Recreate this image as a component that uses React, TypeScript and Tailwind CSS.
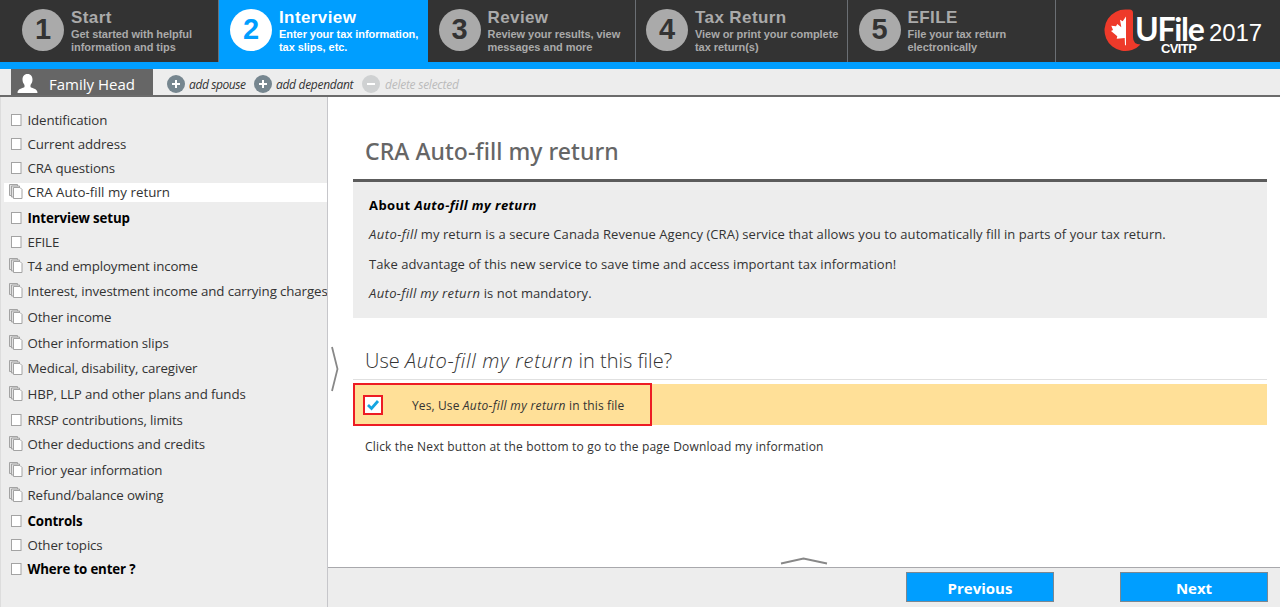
import React from "react";

type Step = { n: number; title: string; lines: [string, string]; width: string; active?: boolean };

const steps: Step[] = [
  { n: 1, title: "Start", lines: ["Get started with helpful", "information and tips"], width: "w-[219px] pl-[22px]" },
  { n: 2, title: "Interview", lines: ["Enter your tax information,", "tax slips, etc."], width: "w-[209px] pl-[11px]", active: true },
  { n: 3, title: "Review", lines: ["Review your results, view", "messages and more"], width: "w-[208px] pl-[10.500px]" },
  { n: 4, title: "Tax Return", lines: ["View or print your complete", "tax return(s)"], width: "w-[212px] pl-[10px]" },
  { n: 5, title: "EFILE", lines: ["File your tax return", "electronically"], width: "w-[208px] pl-[10.500px]" },
];

type Item = { label: string; stacked?: boolean; bold?: boolean; selected?: boolean };

const items: Item[] = [
  { label: "Identification" },
  { label: "Current address" },
  { label: "CRA questions" },
  { label: "CRA Auto-fill my return", stacked: true, selected: true },
  { label: "Interview setup", bold: true },
  { label: "EFILE" },
  { label: "T4 and employment income", stacked: true },
  { label: "Interest, investment income and carrying charges", stacked: true },
  { label: "Other income", stacked: true },
  { label: "Other information slips", stacked: true },
  { label: "Medical, disability, caregiver", stacked: true },
  { label: "HBP, LLP and other plans and funds", stacked: true },
  { label: "RRSP contributions, limits" },
  { label: "Other deductions and credits", stacked: true },
  { label: "Prior year information", stacked: true },
  { label: "Refund/balance owing", stacked: true },
  { label: "Controls", bold: true },
  { label: "Other topics" },
  { label: "Where to enter ?", bold: true },
];

function PageIcon() {
  return (
    <svg width="16" height="18" viewBox="0 0 16 18" className="block shrink-0">
      <rect x="3.5" y="3.5" width="9.500" height="11" fill="#fff" stroke="#a3a3a3" />
    </svg>
  );
}

function PagesIcon() {
  return (
    <svg width="16" height="18" viewBox="0 0 16 18" className="block shrink-0">
      <path d="M1.500 1.500h8v11h-8z" fill="#e2e2e2" stroke="#a3a3a3" />
      <path d="M3.500 3h8v11h-8z" fill="#e2e2e2" stroke="#a3a3a3" />
      <path d="M5.500 4.500h6.500l2 2v9h-8.500z" fill="#fff" stroke="#a3a3a3" />
    </svg>
  );
}

function RoundIcon({ minus }: { minus?: boolean }) {
  return (
    <svg width="18" height="18" viewBox="0 0 18 18" className="mt-[3px] block shrink-0">
      <circle cx="9" cy="9" r="9" fill={minus ? "#cfd1d2" : "#76868f"} />
      <path d={minus ? "M5 9h8" : "M5 9h8M9 5v8"} stroke="#fff" strokeWidth="2" />
    </svg>
  );
}

function Logo() {
  return (
    <div className="relative h-[62px] w-[160px]">
      <svg width="40" height="44" viewBox="0 0 40 44" className="absolute left-0 top-[8px]">
        <path d="M21.500 1.500H25.500q3.500 0 3.500 3.500V29q0 7.500 7.500 7.500A20.800 20.800 0 1 1 21.500 1.500z" fill="#ee3a2a" />
        <path
          d="M22 8.500l-3.300 4.800-2.700-1.600 1.300 7.600-4-3.300-1.300 2.300-4.700-.6 1.700 4.300-2 1 6.300 5.300-.6 2.400 8-.7.300 7.300h1z"
          fill="#fff"
        />
      </svg>
      <div className="absolute left-[31px] top-[14px] font-[Lato] text-[32px] font-bold leading-[29px] tracking-[-1.300px]">UFile</div>
      <div className="absolute left-[57px] top-[42px] text-[13px] font-bold leading-[14px] tracking-[-0.6px]">CVITP</div>
      <div className="absolute left-[105px] top-[19px] text-[24px] leading-[28px] tracking-[-0.1px]">2017</div>
    </div>
  );
}

export default function App() {
  return (
    <div className="flex h-[607px] w-[1280px] flex-col overflow-hidden bg-white font-['Open_Sans','Noto_Sans',sans-serif] text-[#333]">
      <header className="flex h-[69px] shrink-0 border-b-[7px] border-[#009eff] bg-[#333] font-['Liberation_Sans',sans-serif] text-white">
        {steps.map((s) => (
          <div
            key={s.n}
            className={`flex shrink-0 border-r pt-[9px] whitespace-nowrap ${s.width} ${
              s.active ? "border-[#009eff] bg-[#009eff] text-white" : "border-[#6b6f74] text-[#aaa]"
            }`}
          >
            <div
              className={`flex h-[42px] w-[42px] shrink-0 items-center justify-center rounded-full text-[29px] font-bold ${
                s.active ? "bg-white text-[#009eff]" : "bg-[#aaa] text-[#333]"
              }`}
            >
              {s.n}
            </div>
            <div className="ml-[7px] font-bold">
              <div className="text-[17px] leading-[18px] tracking-[0.4px]">{s.title}</div>
              <div className="mt-[1px] text-[11px] leading-[12.5px] tracking-[-0.05px]">
                {s.lines[0]}
                <br />
                {s.lines[1]}
              </div>
            </div>
          </div>
        ))}
        <div className="ml-[48px]">
          <Logo />
        </div>
      </header>

      <div className="flex h-[28px] shrink-0 items-end border-b-2 border-[#6b6b6b] bg-[#ededed] pl-[11px]">
        <div className="flex h-[26px] w-[142px] items-center bg-[#666] text-[15px] text-white">
          <svg width="22" height="20" viewBox="0 0 22 20" className="ml-[6px] mt-[3px]">
            <path d="M10.500 0c3.500 0 5 2.500 5 5.500 0 2.500-1 4-2 5.500v2c1 1.500 7 1 7 6H.5c0-5 6-4.500 7-6v-2c-1-1.500-2-3-2-5.500C5.500 2.500 7 0 10.500 0z" fill="#fff" />
          </svg>
          <span className="ml-[10px] mt-[5px] whitespace-nowrap">Family Head</span>
        </div>
        <div className="flex h-[26px] items-center pl-[14px] text-[12px] italic whitespace-nowrap">
          <RoundIcon />
          <span className="ml-1 mt-[5px] w-[65px] tracking-[-0.4px]">add spouse</span>
          <RoundIcon />
          <span className="ml-1 mt-[5px] w-[86px] tracking-[-0.3px]">add dependant</span>
          <RoundIcon minus />
          <span className="ml-[5px] mt-[5px] tracking-[-0.25px] text-[#bbb]">delete selected</span>
        </div>
      </div>

      <div className="flex min-h-0 flex-1">
        <nav className="w-[328px] shrink-0 overflow-hidden border-x border-l-[#ddd] border-r-[#c6c6ca] bg-[#ededed] pt-[14px]">
          {items.map((it) => (
            <div key={it.label} className={`flex items-start ${it.stacked ? "h-[25.7px]" : "h-[24px]"}`}>
              <div
                className={`ml-[3px] flex h-[19px] w-[323px] shrink-0 items-center pl-[4px] ${
                  it.selected ? "bg-white" : ""
                }`}
              >
                <span className="-mt-px">{it.stacked ? <PagesIcon /> : <PageIcon />}</span>
                <span
                  className={`ml-[3.500px] text-[13.3px] leading-[19px] whitespace-nowrap ${
                    it.bold
                      ? "font-bold tracking-[-0.15px] text-black"
                      : it.selected
                        ? "tracking-[0.03px] text-[#333]"
                        : "tracking-[-0.12px] text-[#333]"
                  }`}
                >
                  {it.label}
                </span>
              </div>
            </div>
          ))}
        </nav>

        <main className="flex min-w-0 flex-1 flex-col">
          <div className="relative h-[470px] shrink-0 pl-[25px] pr-[13px] pt-[38px]">
            <svg width="10" height="48" viewBox="0 0 10 48" className="absolute left-[2px] top-[248px]">
              <path d="M2 2L7.500 24L2 46" fill="none" stroke="#888" strokeWidth="1.800" />
            </svg>
            <h1 className="h-[44px] pl-[12px] font-['Noto_Sans',sans-serif] text-[23px] font-medium leading-[33px] tracking-[0.05px] text-[#666]">CRA Auto-fill my return</h1>
            <section className="h-[139px] border-t-[3px] border-[#5c5c5c] bg-[#ededed] pl-[16px] pt-[9px] text-[13px] leading-[29.3px] tracking-[0.07px] whitespace-nowrap">
              <p className="font-bold tracking-[0.44px] text-black">About <i>Auto-fill my return</i></p>
              <p><i className="tracking-[0.45px]">Auto-fill</i> my return is a secure Canada Revenue Agency (CRA) service that allows you to automatically fill in parts of your tax return.</p>
              <p>Take advantage of this new service to save time and access important tax information!</p>
              <p><i className="tracking-[0.36px]">Auto-fill my return</i> is not mandatory.</p>
            </section>
            <h2 className="mt-[24px] h-[38px] border-b border-[#e0e0e0] pl-[12px] text-[20px] font-light leading-[38px] whitespace-nowrap">
              Use <i className="tracking-[0.68px]">Auto-fill my return</i> in this file?
            </h2>
            <div className="mt-[4px] h-[41px] bg-[#ffe098]">
              <label className="relative -top-px flex h-[43px] w-[299px] items-center border-2 border-[#ed1c24] pl-[8px] text-[12px] tracking-[0.12px] whitespace-nowrap">
                <span className="flex h-[20px] w-[20px] items-center justify-center border-2 border-[#ed1c24] bg-white">
                  <svg width="14" height="12" viewBox="0 0 14 12" className="shrink-0">
                    <path d="M2 6L5.500 9.500L12 2" fill="none" stroke="#14a5e0" strokeWidth="2.800" />
                  </svg>
                </span>
                <span className="ml-[29px] mt-[2px]">Yes, Use <i className="tracking-[0.35px]">Auto-fill my return</i> in this file</span>
              </label>
            </div>
            <p className="mt-[13px] pl-[12px] text-[12px] leading-[18px] tracking-[0.175px]">
              Click the Next button at the bottom to go to the page Download my information
            </p>
            <svg width="48" height="8" viewBox="0 0 48 8" className="absolute bottom-[2px] left-[452px]">
              <path d="M1 6.500L23.500 1.500L47 6.500" fill="none" stroke="#888" strokeWidth="1.800" />
            </svg>
          </div>
          <footer className="flex flex-1 justify-end border-t border-[#a8a8ac] bg-[#ededed] pr-[12px] pt-[4px] text-[15px] font-bold text-white">
            <button className="mr-[66px] h-[30px] w-[148px] border border-[#7b8791] bg-[#009eff] pt-[2px]">Previous</button>
            <button className="h-[30px] w-[148px] border border-[#7b8791] bg-[#009eff] pt-[2px]">Next</button>
          </footer>
        </main>
      </div>
    </div>
  );
}
